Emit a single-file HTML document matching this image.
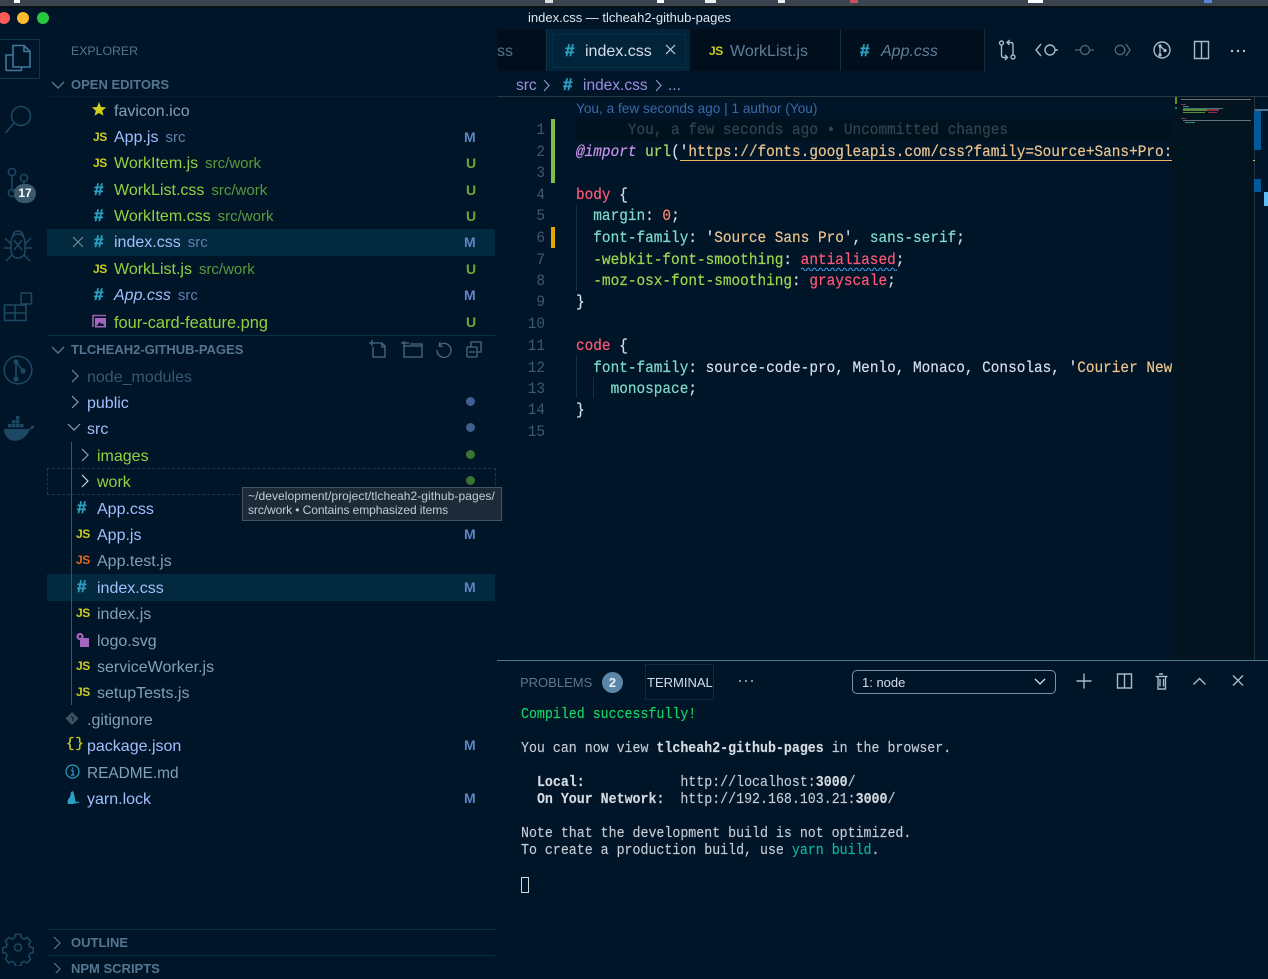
<!DOCTYPE html>
<html><head><meta charset="utf-8">
<style>
html,body{margin:0;padding:0;background:#011529;}
body{width:1268px;height:973px;position:relative;overflow:hidden;font-family:"Liberation Sans",sans-serif;}
div,span.a,svg{position:absolute;}
.t{white-space:nowrap;line-height:20px;height:20px;font-size:16px;margin-top:1px;}
.f{margin-top:2px;}
.d{font-size:15px;margin-left:7px;}
.g{color:#93d23f}.gd{color:#5b9a3c}.b{color:#a2bffc}.bd{color:#5f7fae}.n{color:#83a0b6}.ig{color:#365873}
.m{position:absolute;left:464px;font-size:14px;font-weight:bold;line-height:20px;color:#5f85c4;}
.u{position:absolute;left:466px;font-size:14px;font-weight:bold;line-height:20px;color:#6fa838;}
.js{position:absolute;font-size:12px;font-weight:bold;line-height:14px;color:#cbcb20;letter-spacing:-.4px;}
.h{position:absolute;font-size:17px;font-weight:bold;line-height:20px;color:#2a9fc0;margin-top:1px;-webkit-text-stroke:.5px #2a9fc0;}
.dot{width:9px;height:9px;border-radius:50%;left:466px;}
.sec{font-size:13px;font-weight:bold;color:#55758f;line-height:20px;white-space:nowrap;left:71px;margin-top:1px;}
.c{left:576px;white-space:pre;font:16px/20px "Liberation Mono",monospace;transform:scaleX(.9);transform-origin:0 0;color:#d6deeb;margin-top:1px;-webkit-text-stroke:.2px;}
.ln{left:505px;width:40px;text-align:right;font:16px/20px "Liberation Mono",monospace;color:#3d5a72;transform:scaleX(.9);transform-origin:100% 0;margin-top:1px;}
.tm{left:521px;white-space:pre;font:15px/17px "Liberation Mono",monospace;transform:scaleX(.885);transform-origin:0 0;color:#c4ccd4;margin-top:1px;-webkit-text-stroke:.15px;}
.tm b{color:#d4dae0}
.i{fill:none;stroke:#1d4864;stroke-width:1.5;}
.tb{fill:none;stroke:#a9bac8;stroke-width:1.4;}
.sel{left:47px;width:448px;height:27px;background:#03293f;}
</style></head><body>

<!-- mac menu bar -->
<div style="left:0;top:0;width:1268px;height:6px;background:#39444e"></div>
<div style="left:0;top:6px;width:1268px;height:2px;background:#0a0f14"></div>
<div style="left:14px;top:0;width:6px;height:3px;background:#fff"></div>
<div style="left:657px;top:0;width:7px;height:3px;background:#fff"></div>
<div style="left:705px;top:0;width:11px;height:3px;background:#eee"></div>
<div style="left:1028px;top:0;width:15px;height:3px;background:#fff"></div>
<div style="left:545px;top:0;width:8px;height:3px;background:#ddd"></div>
<div style="left:778px;top:0;width:7px;height:3px;background:#eee"></div>
<div style="left:850px;top:0;width:8px;height:3px;background:#c55060"></div>
<div style="left:1204px;top:0;width:8px;height:3px;background:#5a86d8"></div>

<!-- traffic lights -->
<div style="left:-2px;top:12px;width:12px;height:12px;border-radius:50%;background:#fc5b57"></div>
<div style="left:17px;top:12px;width:12px;height:12px;border-radius:50%;background:#fdbc2e"></div>
<div style="left:37px;top:12px;width:12px;height:12px;border-radius:50%;background:#27c83f"></div>
<div class="t" style="left:528px;top:7px;font-size:13px;color:#dfe6ec">index.css — tlcheah2-github-pages</div>

<!-- activity bar -->
<div style="left:-1px;top:39px;width:39px;height:38px;border:1px solid #0d3449"></div>
<svg style="left:0;top:30px" width="47" height="420" viewBox="0 0 47 420">
<g fill="none" stroke="#41789b" stroke-width="1.6">
<path d="M13 27V15.500h11l6 6V37H13z"/><path d="M24 15v6.500h6"/><path d="M13 25H6v14.500c0 1 .5 1 1 1h13.500c.7 0 1-.5 1-1V37"/>
</g>
<g class="i">
<circle cx="21" cy="86" r="9.500"/><path d="M14 93L5.500 103"/>
<circle cx="12" cy="142" r="3.600"/><circle cx="24" cy="148" r="3.600"/><circle cx="12" cy="163" r="3.600"/><path d="M12 146v13M24 152c0 5-8 6-12 10"/>
<path d="M11 213c0-6 3-9 7-9s7 3 7 9v8c0 4-3 7-7 7s-7-3-7-7z"/><path d="M13 206c0-3 2-5 5-5s5 2 5 5M14 210l8 10M22 210l-8 10M11 214l-6-6M25 214l6-6M11 218H4M25 218h7M12 225l-6 6M24 225l6 6"/>
<rect x="21" y="263" width="10.500" height="11" rx="1"/><path d="M4.500 275H26v15.500H4.500zM4.500 283H26M15 275v15.500"/>
<circle cx="18" cy="340" r="13.800"/>
</g>
<g fill="#1d4864"><circle cx="16" cy="332" r="2.600"/><circle cx="23" cy="341" r="2.600"/><circle cx="16" cy="349" r="2.600"/></g>
<path d="M16 332v17M16 332l7 9" stroke="#1d4864" stroke-width="1.6"/>
<path d="M4 399h24c2 0 3-2 3.500-3 1-.500 2.500-.2 3 .2-.6 2-2.500 3-4.500 3-2 5-7 11.500-15 11.500C8 411 4 405 4 399z" fill="#1d4864"/>
<g fill="#1d4864"><rect x="8" y="394" width="3.500" height="3.500"/><rect x="12" y="394" width="3.500" height="3.500"/><rect x="16" y="394" width="3.500" height="3.500"/><rect x="20" y="394" width="3.500" height="3.500"/><rect x="12" y="390" width="3.500" height="3.500"/><rect x="16" y="390" width="3.500" height="3.500"/><rect x="16" y="386" width="3.500" height="3.500"/></g>
</svg>
<div style="left:14px;top:184px;width:22px;height:19px;border-radius:10px;background:#3b586d;color:#fff;font-size:12px;font-weight:bold;line-height:19px;text-align:center">17</div>
<svg style="left:0;top:930px" width="40" height="36" viewBox="0 0 40 36"><g class="i" transform="translate(18 17.500)"><circle r="3.500"/><path d="M-3-14h6l1 4 3 1.500 3.500-2 4 4.500-2 3.500 1 3 4 1v5.500l-4 1-1 3 2 3.500-4 4.500-3.500-2-3 1.500-1 4h-6l-1-4-3-1.500-3.500 2-4-4.500 2-3.500-1-3-4-1v-5.500l4-1 1-3-2-3.500 4-4.500 3.500 2 3-1.500z" transform="translate(0 -1) scale(.87)" stroke-width="1.700"/></g></svg>

<!-- sidebar -->
<div class="t" style="left:71px;top:40px;font-size:12.300px;color:#55758f">EXPLORER</div>
<svg style="left:50px;top:78px" width="16" height="14"><path class="tb" style="stroke:#55758f" d="M2 4l6 6 6-6"/></svg>
<div class="sec" style="top:74px">OPEN EDITORS</div>
<div style="left:47px;top:96px;width:448px;height:1px;background:#021e30"></div>

<div class="sel" style="top:229px"></div>
<svg style="left:91px;top:101px" width="16" height="16"><path d="M8 1l2 5 5.200.4-4 3.300 1.300 5.100L8 12l-4.500 2.800 1.300-5.100-4-3.300L6 6z" fill="#cfcf1b"/></svg>
<div class="t n f" style="left:114px;top:100px">favicon.ico</div>

<div class="js" style="left:93px;top:130px">JS</div><div class="t b" style="left:114px;top:127px">App.js<span class="d bd">src</span></div><div class="m" style="top:127px">M</div>
<div class="js" style="left:93px;top:156px">JS</div><div class="t g" style="left:114px;top:153px">WorkItem.js<span class="d gd">src/work</span></div><div class="u" style="top:153px">U</div>
<div class="h" style="left:94px;top:179px">#</div><div class="t g" style="left:114px;top:180px">WorkList.css<span class="d gd">src/work</span></div><div class="u" style="top:180px">U</div>
<div class="h" style="left:94px;top:205px">#</div><div class="t g" style="left:114px;top:206px">WorkItem.css<span class="d gd">src/work</span></div><div class="u" style="top:206px">U</div>
<svg style="left:71px;top:235px" width="14" height="14"><path d="M2 2l10 10M12 2L2 12" stroke="#6f8aa0" stroke-width="1.200" fill="none"/></svg>
<div class="h" style="left:94px;top:231px">#</div><div class="t b" style="left:114px;top:232px">index.css<span class="d bd">src</span></div><div class="m" style="top:232px">M</div>
<div class="js" style="left:93px;top:262px">JS</div><div class="t g" style="left:114px;top:259px">WorkList.js<span class="d gd">src/work</span></div><div class="u" style="top:259px">U</div>
<div class="h" style="left:94px;top:284px">#</div><div class="t b" style="left:114px;top:285px;font-style:italic">App.css<span class="d bd" style="font-style:normal">src</span></div><div class="m" style="top:285px">M</div>
<svg style="left:91px;top:314px" width="16" height="15"><path d="M2 13V1.500h13" fill="none" stroke="#9a5fb0" stroke-width="1.600"/><rect x="4" y="4" width="11" height="9.500" fill="#a566c0"/><path d="M5.500 12l3-4 2 2 1-1 2 3z" fill="#01202f"/></svg>
<div class="t g" style="left:114px;top:312px;font-size:16.400px">four-card-feature.png</div><div class="u" style="top:312px">U</div>

<div style="left:47px;top:335px;width:448px;height:1px;background:#0a3045"></div>
<svg style="left:50px;top:343px" width="16" height="14"><path class="tb" style="stroke:#55758f" d="M2 4l6 6 6-6"/></svg>
<div class="sec" style="top:339px">TLCHEAH2-GITHUB-PAGES</div>
<svg style="left:365px;top:338px" width="125" height="22"><g fill="none" stroke="#4a6a84" stroke-width="1.300"><path d="M8 5h9l3 3v11H8V9M4 5h6M7 2v6M17 5v4h3"/><path d="M39 8h18v11H39V3M36 5h8M39 8h6M57 8V6H45"/><path d="M75 4l-1 4 4 .5M74.500 7A7 7 0 1 1 72 12"/><rect x="102" y="9" width="10" height="10" rx="1"/><path d="M106 9V4h10v10h-4M104 14h6"/></g></svg>

<svg style="left:70px;top:368px" width="12" height="16"><path d="M2 2l6 6-6 6" fill="none" stroke="#6f8aa0" stroke-width="1.200"/></svg>
<div class="t ig f" style="left:87px;top:366px">node_modules</div>
<svg style="left:70px;top:394px" width="12" height="16"><path d="M2 2l6 6-6 6" fill="none" stroke="#8aa0b2" stroke-width="1.200"/></svg>
<div class="t b f" style="left:87px;top:392px">public</div><div class="dot" style="top:397px;background:#3f5f90"></div>
<svg style="left:66px;top:422px" width="16" height="12"><path d="M2 2l6 6 6-6" fill="none" stroke="#8aa0b2" stroke-width="1.200"/></svg>
<div class="t b f" style="left:87px;top:418px">src</div><div class="dot" style="top:423px;background:#3f5f90"></div>
<div style="left:71px;top:442px;width:1px;height:263px;background:#3a5367"></div>
<svg style="left:80px;top:447px" width="12" height="16"><path d="M2 2l6 6-6 6" fill="none" stroke="#8aa0b2" stroke-width="1.200"/></svg>
<div class="t g f" style="left:97px;top:445px">images</div><div class="dot" style="top:450px;background:#3a7434"></div>
<div style="left:47px;top:468px;width:447px;height:25px;border:1px dashed #123a50"></div>
<svg style="left:80px;top:473px" width="12" height="16"><path d="M2 2l6 6-6 6" fill="none" stroke="#d0dae2" stroke-width="1.200"/></svg>
<div class="t g f" style="left:97px;top:471px">work</div><div class="dot" style="top:476px;background:#3a7434"></div>

<div class="h" style="left:77px;top:497px">#</div><div class="t b f" style="left:97px;top:498px">App.css</div>
<div class="js" style="left:76px;top:527px">JS</div><div class="t b f" style="left:97px;top:524px">App.js</div><div class="m" style="top:524px">M</div>
<div class="js" style="left:76px;top:553px;color:#e0681c">JS</div><div class="t n f" style="left:97px;top:550px">App.test.js</div>
<div class="sel" style="top:574px"></div>
<div style="left:71px;top:574px;width:1px;height:27px;background:#3a5367"></div>
<div class="h" style="left:77px;top:576px">#</div><div class="t b f" style="left:97px;top:577px">index.css</div><div class="m" style="top:577px">M</div>
<div class="js" style="left:76px;top:606px">JS</div><div class="t n f" style="left:97px;top:603px">index.js</div>
<svg style="left:75px;top:632px" width="16" height="16"><circle cx="5" cy="4.500" r="3.600" fill="#a566c0"/><circle cx="5" cy="4.500" r="1.400" fill="#011529"/><rect x="5" y="6" width="9" height="9" fill="#a566c0"/></svg>
<div class="t n f" style="left:97px;top:630px">logo.svg</div>
<div class="js" style="left:76px;top:659px">JS</div><div class="t n f" style="left:97px;top:656px">serviceWorker.js</div>
<div class="js" style="left:76px;top:685px">JS</div><div class="t n f" style="left:97px;top:682px">setupTests.js</div>
<svg style="left:65px;top:711px" width="16" height="16"><path d="M7 1l6.500 6.500L7 14 .5 7.500z" fill="#3d5560"/><path d="M6 5l2 2v3" stroke="#011529" fill="none"/></svg>
<div class="t n f" style="left:87px;top:709px">.gitignore</div>
<div class="t" style="left:66px;top:733px;font:14px/20px 'Liberation Mono',monospace;color:#cbcb20;letter-spacing:1px;-webkit-text-stroke:.3px #cbcb20">{}</div>
<div class="t b f" style="left:87px;top:735px">package.json</div><div class="m" style="top:735px">M</div>
<svg style="left:65px;top:764px" width="15" height="15"><circle cx="7.500" cy="7.500" r="6.500" fill="none" stroke="#2a9fc0" stroke-width="1.200"/><path d="M6 6.500h2V11M5.800 11h3.600M7.500 3.500v1.500" stroke="#2a9fc0" stroke-width="1.200" fill="none"/></svg>
<div class="t n f" style="left:87px;top:762px;font-size:15.400px">README.md</div>
<svg style="left:65px;top:790px" width="15" height="15"><path d="M3 14c-1-3 0-5 2-7l1-5 2-1 1 3c1 3 1 6 2 9l-3 1z" fill="#2a9fc0"/><path d="M10 13l4-1" stroke="#2a9fc0" stroke-width="1.200"/></svg>
<div class="t b f" style="left:87px;top:788px">yarn.lock</div><div class="m" style="top:788px">M</div>

<div style="left:47px;top:929px;width:448px;height:1px;background:#0a3045"></div>
<svg style="left:52px;top:935px" width="12" height="16"><path d="M2 2l6 6-6 6" fill="none" stroke="#55758f" stroke-width="1.200"/></svg>
<div class="sec" style="top:932px">OUTLINE</div>
<div style="left:47px;top:955px;width:448px;height:1px;background:#0a3045"></div>
<svg style="left:52px;top:961px" width="12" height="12"><path d="M2 2l6 6-6 6" fill="none" stroke="#55758f" stroke-width="1.200"/></svg>
<div class="sec" style="top:958px">NPM SCRIPTS</div>

<!-- tooltip -->
<div style="left:242px;top:487px;width:258px;height:32px;background:#1d2b38;border:1px solid #45545f"></div>
<div class="t" style="left:248px;top:485px;font-size:12px;color:#c3ccd4;letter-spacing:.07px">~/development/project/tlcheah2-github-pages/</div>
<div class="t" style="left:248px;top:499px;font-size:12px;color:#c3ccd4;letter-spacing:-.08px">src/work • Contains emphasized items</div>

<!-- tabs -->
<div style="left:497px;top:29px;width:771px;height:42px;background:#011529"></div>
<div style="left:497px;top:29px;width:49px;height:42px;background:#010f1c"></div>
<div class="t" style="left:497px;top:41px;color:#55738a">ss</div>
<div style="left:546px;top:29px;width:144px;height:42px;background:#01243a;border-left:1px solid #12334a;box-sizing:border-box"></div>
<div style="left:552px;top:34px;width:132px;height:32px;border:1px solid #052f46"></div>
<div class="h" style="left:565px;top:40px">#</div>
<div class="t" style="left:585px;top:41px;color:#d6deeb">index.css</div>
<svg style="left:664px;top:43px" width="14" height="14"><path d="M2 2l9 9M11 2l-9 9" stroke="#c5d0da" stroke-width="1.200"/></svg>
<div style="left:690px;top:29px;width:151px;height:42px;background:#010f1c;border-right:1px solid #13303f;box-sizing:border-box"></div>
<div class="js" style="left:709px;top:44px">JS</div>
<div class="t" style="left:730px;top:41px;color:#5f7e97">WorkList.js</div>
<div style="left:841px;top:29px;width:144px;height:42px;background:#010f1c;border-right:1px solid #13303f;box-sizing:border-box"></div>
<div class="h" style="left:860px;top:40px">#</div>
<div class="t" style="left:881px;top:41px;color:#5f7e97;font-style:italic">App.css</div>

<!-- toolbar -->
<svg style="left:996px;top:38px" width="250" height="24">
<g class="tb"><circle cx="5.500" cy="5" r="2"/><circle cx="17" cy="19" r="2"/><path d="M5.500 7v10c0 2 1 2.500 2 2.500h4M9 17l2.500 2.500L9 22M17 17V7c0-2-1-2.500-2-2.500h-4M13.500 2L11 4.500 13.500 7"/>
<circle cx="54" cy="12" r="5"/><path d="M45 6l-5 6 5 6M59 12h3"/>
<path d="M198.500 3.500h14v17h-14zM205.500 3.500v17"/></g>
<g fill="none" stroke="#55687a" stroke-width="1.300"><circle cx="89" cy="12" r="4.500"/><path d="M79 12h5.500M93.500 12H98"/><circle cx="124" cy="12" r="4.700"/><path d="M128.700 12h1M130 6l4 6-4 6"/></g>
<g class="tb"><circle cx="166" cy="12" r="8"/></g>
<g fill="#b5c3cf"><circle cx="164" cy="8" r="1.600"/><circle cx="169" cy="12.500" r="1.600"/><circle cx="164" cy="17" r="1.600"/></g><path d="M164 8v9M164 8l5 4.500" stroke="#b5c3cf" stroke-width="1.200"/>
<g fill="#b5c3cf"><circle cx="236" cy="13" r="1.200"/><circle cx="242" cy="13" r="1.200"/><circle cx="248" cy="13" r="1.200"/></g>
</svg>

<!-- breadcrumbs -->
<div class="t" style="left:516px;top:75px;color:#9d8ee0;font-size:15.500px">src</div>
<svg style="left:542px;top:78px" width="10" height="15"><path d="M2 2l5 5.500L2 13" fill="none" stroke="#8b9cc8" stroke-width="1.100"/></svg>
<div class="h" style="left:563px;top:74px">#</div>
<div class="t" style="left:583px;top:75px;color:#9d8ee0;font-size:15.500px">index.css</div>
<svg style="left:654px;top:78px" width="10" height="15"><path d="M2 2l5 5.500L2 13" fill="none" stroke="#8b9cc8" stroke-width="1.100"/></svg>
<div class="t" style="left:668px;top:75px;color:#9d8ee0;font-size:15.500px">...</div>
<div style="left:497px;top:96px;width:771px;height:1px;background:#2a3844"></div>

<!-- editor -->
<div class="t" style="left:576px;top:98px;font-size:13.650px;color:#3b68a6">You, a few seconds ago | 1 author (You)</div>
<div style="left:575px;top:119px;width:597px;height:22px;background:#01121f"></div>
<div style="left:1172px;top:97px;width:82px;height:563px;background:#01141f"></div>
<div style="left:551px;top:119px;width:4px;height:64px;background:#7fbf46"></div>
<div style="left:551px;top:227px;width:4px;height:21px;background:#e0a800"></div>
<div style="left:576px;top:205px;width:1px;height:86px;background:#0f3248"></div>
<div style="left:576px;top:356px;width:1px;height:42px;background:#0f3248"></div>
<div style="left:593px;top:377px;width:1px;height:21px;background:#0f3248"></div>

<div class="ln" style="top:119px">1</div><div class="ln" style="top:141px">2</div><div class="ln" style="top:162px">3</div><div class="ln" style="top:184px">4</div><div class="ln" style="top:205px">5</div><div class="ln" style="top:227px">6</div><div class="ln" style="top:249px">7</div><div class="ln" style="top:270px">8</div><div class="ln" style="top:291px">9</div><div class="ln" style="top:313px">10</div><div class="ln" style="top:335px">11</div><div class="ln" style="top:357px">12</div><div class="ln" style="top:378px">13</div><div class="ln" style="top:399px">14</div><div class="ln" style="top:421px">15</div>

<div style="left:497px;top:97px;width:675px;height:563px;overflow:hidden">
<div style="left:-497px;top:-97px;width:1268px;height:973px">
<div class="c" style="top:119px;color:#33434f">      You, a few seconds ago • Uncommitted changes</div>
<div class="c" style="top:141px"><span style="color:#c792ea;font-style:italic">@import</span> <span style="color:#a6d86a">url</span>('<span style="color:#ecc48d">https://fonts.googleapis.com/css?family=Source+Sans+Pro:weight</span></div>
<div class="c" style="top:184px"><span style="color:#ff5874">body</span> {</div>
<div class="c" style="top:205px">  <span style="color:#7fdbca">margin</span>: <span style="color:#f78c6c">0</span>;</div>
<div class="c" style="top:227px">  <span style="color:#7fdbca">font-family</span>: '<span style="color:#ecc48d">Source Sans Pro</span>', <span style="color:#7fdbca">sans-serif</span>;</div>
<div class="c" style="top:249px">  <span style="color:#9fd84a">-webkit-font-smoothing</span>: <span style="color:#ff5874">antialiased</span>;</div>
<div class="c" style="top:270px">  <span style="color:#9fd84a">-moz-osx-font-smoothing</span>: <span style="color:#ff5874">grayscale</span>;</div>
<div class="c" style="top:291px">}</div>
<div class="c" style="top:335px"><span style="color:#ff5874">code</span> {</div>
<div class="c" style="top:357px">  <span style="color:#7fdbca">font-family</span>: source-code-pro, Menlo, Monaco, Consolas, '<span style="color:#ecc48d">Courier New</span>',</div>
<div class="c" style="top:378px">    <span style="color:#7fdbca">monospace</span>;</div>
<div class="c" style="top:399px">}</div>
</div>
</div>
<div style="left:680px;top:160px;width:492px;height:1px;background:#ecb464"></div>
<svg style="left:801px;top:266px" width="96" height="5"><path d="M0 3.500q1.500-3 3-0t3 0 3 0 3 0 3 0 3 0 3 0 3 0 3 0 3 0 3 0 3 0 3 0 3 0 3 0 3 0 3 0 3 0 3 0 3 0 3 0 3 0 3 0 3 0 3 0 3 0 3 0 3 0 3 0 3 0 3 0 3 0" fill="none" stroke="#3a9ee0" stroke-width="1"/></svg>

<!-- minimap -->
<div style="left:1175px;top:97px;width:2px;height:7px;background:#5f9020"></div>
<div style="left:1175px;top:107px;width:2px;height:2px;background:#1a80a0"></div>
<div style="left:1181px;top:99px;width:70px;height:1px;background:#6a6a70"></div>
<div style="left:1181px;top:104px;width:5px;height:1px;background:#8a3048"></div>
<div style="left:1183px;top:106px;width:6px;height:1px;background:#3e8a80"></div>
<div style="left:1183px;top:108px;width:40px;height:1px;background:#3e7a78"></div>
<div style="left:1183px;top:109px;width:35px;height:2px;background:#5a8a3a"></div>
<div style="left:1207px;top:109px;width:12px;height:2px;background:#8a3048"></div>
<div style="left:1183px;top:112px;width:22px;height:1px;background:#5a8a3a"></div>
<div style="left:1208px;top:112px;width:9px;height:1px;background:#8a3048"></div>
<div style="left:1181px;top:118px;width:5px;height:1px;background:#8a3048"></div>
<div style="left:1183px;top:120px;width:68px;height:1px;background:#65707a"></div>
<div style="left:1185px;top:122px;width:10px;height:1px;background:#2e8a80"></div>
<!-- scrollbar -->
<div style="left:1254px;top:97px;width:1px;height:563px;background:#25333f"></div>
<div style="left:1255px;top:109px;width:13px;height:2px;background:#4a7590"></div>
<div style="left:1254px;top:111px;width:7px;height:39px;background:#015a9a"></div>
<div style="left:1253px;top:160px;width:2px;height:1px;background:#ecb464"></div>
<div style="left:1254px;top:179px;width:7px;height:13px;background:#015a9a"></div>
<div style="left:1264px;top:192px;width:4px;height:14px;background:#5fbcf5"></div>

<!-- panel -->
<div style="left:497px;top:660px;width:771px;height:1px;background:#4f7693"></div>
<div class="t" style="left:520px;top:672px;font-size:13px;color:#5f7588">PROBLEMS</div>
<div style="left:602px;top:672px;width:21px;height:21px;border-radius:50%;background:#5b86a8;color:#e8eef2;font-size:13px;font-weight:bold;line-height:21px;text-align:center">2</div>
<div style="left:645px;top:664px;width:67px;height:34px;border:1px solid #0c2c40"></div>
<div class="t" style="left:647px;top:672px;font-size:13px;color:#d6deeb">TERMINAL</div>
<svg style="left:738px;top:678px" width="16" height="6"><g fill="#a9bac8"><circle cx="2" cy="3" r="1"/><circle cx="8" cy="3" r="1"/><circle cx="14" cy="3" r="1"/></g></svg>
<div style="left:852px;top:670px;width:202px;height:22px;border:1px solid #7696ae;border-radius:5px"></div>
<div class="t" style="left:862px;top:672px;font-size:13px;color:#d6deeb">1: node</div>
<svg style="left:1032px;top:676px" width="16" height="12"><path d="M3 3l5 5 5-5" fill="none" stroke="#d6deeb" stroke-width="1.300"/></svg>
<svg style="left:1070px;top:670px" width="180" height="24"><g class="tb">
<path d="M14 3.500v15M6.500 11h15"/>
<path d="M47.500 4h14v14h-14zM54.500 4v14"/>
<path d="M85.500 6.500h12M88 6.500v12.500h7.500V6.500M89 4h4M90 9v7.500M93.500 9v7.500"/>
<path d="M123.500 14.500l6-6 6 6"/>
<path d="M163 5.500l10 10M173 5.500l-10 10"/></g></svg>

<div class="tm" style="top:705px;color:#16d467">Compiled successfully!</div>
<div class="tm" style="top:739px">You can now view <b>tlcheah2-github-pages</b> in the browser.</div>
<div class="tm" style="top:773px">  <b>Local:</b>            http://localhost:<b>3000</b>/</div>
<div class="tm" style="top:790px">  <b>On Your Network:</b>  http://192.168.103.21:<b>3000</b>/</div>
<div class="tm" style="top:824px">Note that the development build is not optimized.</div>
<div class="tm" style="top:841px">To create a production build, use <span style="color:#08b89a">yarn build</span>.</div>
<div style="left:521px;top:877px;width:6px;height:14px;border:1px solid #d0d8de"></div>

</body></html>
